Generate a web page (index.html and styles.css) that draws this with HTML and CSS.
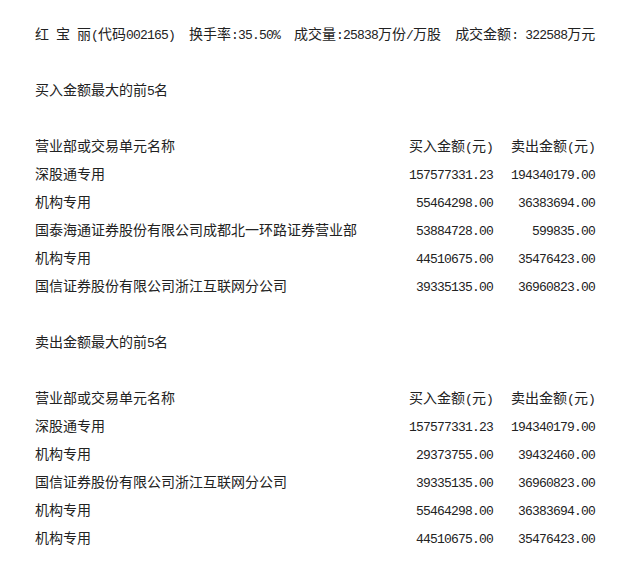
FILE: index.html
```html
<!DOCTYPE html>
<html lang="zh-CN">
<head>
<meta charset="utf-8">
<title>红宝丽 龙虎榜</title>
<link rel="stylesheet" href="styles.css">
</head>
<body>
<div class="page">
  <p class="line">红<span class="a"> </span>宝<span class="a"> </span>丽<span class="a">(</span>代码<span class="a">002165)  </span>换手率<span class="a">:35.50%  </span>成交量<span class="a">:25838</span>万份<span class="a">/</span>万股<span class="a">  </span>成交金额<span class="a">: 322588</span>万元</p>

  <p class="line">买入金额最大的前<span class="a">5</span>名</p>

  <div class="table">
    <div class="row">
      <span class="name">营业部或交易单元名称</span>
      <span class="num">买入金额<span class="a">(</span>元<span class="a">)</span></span>
      <span class="num">卖出金额<span class="a">(</span>元<span class="a">)</span></span>
    </div>
    <div class="row">
      <span class="name">深股通专用</span>
      <span class="num"><span class="a">157577331.23</span></span>
      <span class="num"><span class="a">194340179.00</span></span>
    </div>
    <div class="row">
      <span class="name">机构专用</span>
      <span class="num"><span class="a">55464298.00</span></span>
      <span class="num"><span class="a">36383694.00</span></span>
    </div>
    <div class="row">
      <span class="name">国泰海通证券股份有限公司成都北一环路证券营业部</span>
      <span class="num"><span class="a">53884728.00</span></span>
      <span class="num"><span class="a">599835.00</span></span>
    </div>
    <div class="row">
      <span class="name">机构专用</span>
      <span class="num"><span class="a">44510675.00</span></span>
      <span class="num"><span class="a">35476423.00</span></span>
    </div>
    <div class="row">
      <span class="name">国信证券股份有限公司浙江互联网分公司</span>
      <span class="num"><span class="a">39335135.00</span></span>
      <span class="num"><span class="a">36960823.00</span></span>
    </div>
  </div>

  <p class="line">卖出金额最大的前<span class="a">5</span>名</p>

  <div class="table">
    <div class="row">
      <span class="name">营业部或交易单元名称</span>
      <span class="num">买入金额<span class="a">(</span>元<span class="a">)</span></span>
      <span class="num">卖出金额<span class="a">(</span>元<span class="a">)</span></span>
    </div>
    <div class="row">
      <span class="name">深股通专用</span>
      <span class="num"><span class="a">157577331.23</span></span>
      <span class="num"><span class="a">194340179.00</span></span>
    </div>
    <div class="row">
      <span class="name">机构专用</span>
      <span class="num"><span class="a">29373755.00</span></span>
      <span class="num"><span class="a">39432460.00</span></span>
    </div>
    <div class="row">
      <span class="name">国信证券股份有限公司浙江互联网分公司</span>
      <span class="num"><span class="a">39335135.00</span></span>
      <span class="num"><span class="a">36960823.00</span></span>
    </div>
    <div class="row">
      <span class="name">机构专用</span>
      <span class="num"><span class="a">55464298.00</span></span>
      <span class="num"><span class="a">36383694.00</span></span>
    </div>
    <div class="row">
      <span class="name">机构专用</span>
      <span class="num"><span class="a">44510675.00</span></span>
      <span class="num"><span class="a">35476423.00</span></span>
    </div>
  </div>
</div>
</body>
</html>
```

FILE: styles.css
```css
html, body {
  margin: 0;
  padding: 0;
  background: #ffffff;
}

.page {
  width: 560px;
  padding: 19px 0 0 35px;
  display: flex;
  flex-direction: column;
  gap: 28px;
  font-family: "Noto Sans CJK SC", "Noto Sans", sans-serif;
  font-size: 14px;
  line-height: 28px;
  color: #222222;
}

.line {
  margin: 0;
  height: 28px;
  white-space: pre;
}

.a {
  font-family: "Liberation Mono", "DejaVu Sans Mono", monospace;
  font-size: 13px;
  line-height: 1;
  letter-spacing: -0.8px;
  white-space: pre;
}

.table {
  display: flex;
  flex-direction: column;
}

.row {
  display: grid;
  grid-template-columns: 1fr 100px 102px;
  height: 28px;
  line-height: 28px;
}

.name {
  white-space: nowrap;
}

.num {
  text-align: right;
  white-space: nowrap;
}
```
